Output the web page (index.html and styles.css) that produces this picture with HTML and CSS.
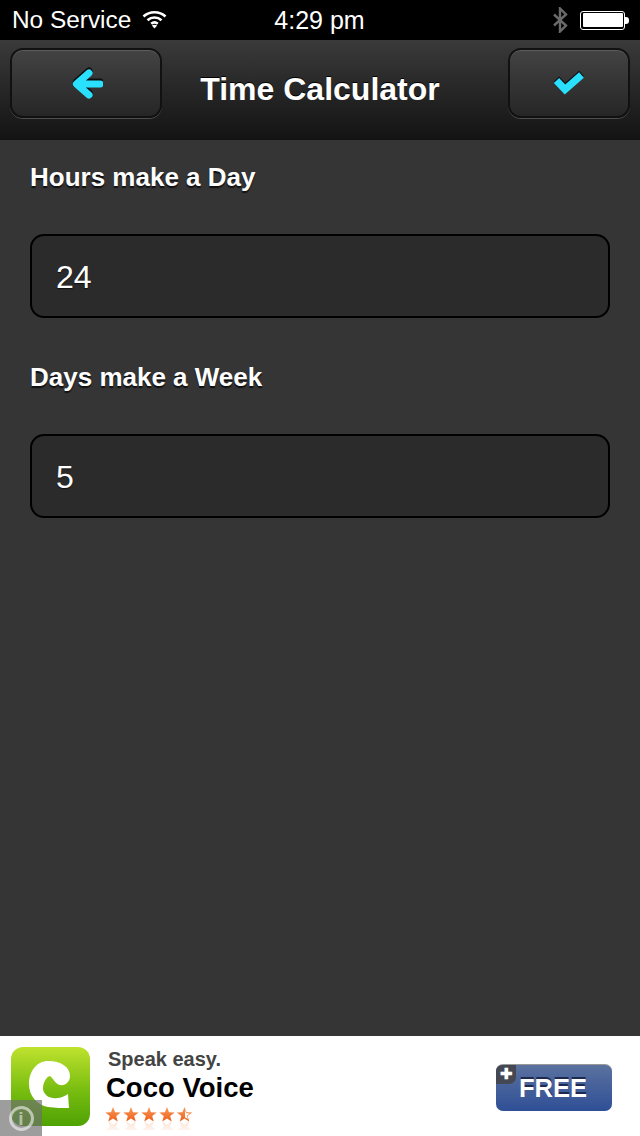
FILE: index.html
```html
<!DOCTYPE html>
<html lang="en">
<head>
<meta charset="utf-8">
<title>Time Calculator</title>
<link rel="stylesheet" href="styles.css">
</head>
<body>
<div class="app">
  <header class="status">
    <div class="status-left">
      <span class="carrier">No Service</span>
      <svg class="wifi" width="26" height="20" viewBox="0 0 26 20"><path d="M1.500 7.500C7.500 1.800 17.500 1.800 23.500 7.500M5.500 11.300C9.500 7.600 15.500 7.600 19.500 11.300M9.200 14.800C11.300 13 13.700 13 15.800 14.800" fill="none" stroke="#fff" stroke-width="2.600"/><path d="M12.500 19.500L9.800 16.600C11.500 15.300 13.500 15.300 15.200 16.600Z" fill="#fff"/></svg>
    </div>
    <span class="clock">4:29 pm</span>
    <div class="status-right">
      <svg class="bt" width="16" height="26" viewBox="0 0 16 26"><path d="M2 7.500L14 18.500L8 24.500V1.500L14 7.500L2 18.500" fill="none" stroke="#6a6a6a" stroke-width="2.400"/></svg>
      <div class="battery"><div class="battery-body"><div class="battery-fill"></div></div><div class="battery-tip"></div></div>
    </div>
  </header>
  <nav class="navbar">
    <button class="nav-btn nav-back" type="button">
      <svg width="34" height="36" viewBox="0 0 34 36"><path class="ico-shadow" d="M20 8L7.500 19L20 30M8 19H31" transform="translate(0 -2)" stroke-width="7" stroke-linecap="round" stroke-linejoin="round"/><path class="ico-cyan" d="M20 8L7.500 19L20 30M8 19H31" stroke-width="7" stroke-linecap="round" stroke-linejoin="round"/></svg>
    </button>
    <h1 class="title">Time Calculator</h1>
    <button class="nav-btn nav-done" type="button">
      <svg width="34" height="30" viewBox="0 0 34 30"><path class="ico-shadow" d="M4.500 12.500L13 21.500L29.500 7" transform="translate(0 -1.500)" stroke-width="7.200"/><path class="ico-cyan" d="M4.500 12.500L13 21.500L29.500 7" stroke-width="7.200"/></svg>
    </button>
  </nav>
  <main class="content">
    <label class="field-label">Hours make a Day</label>
    <div class="field">24</div>
    <label class="field-label">Days make a Week</label>
    <div class="field">5</div>
  </main>
  <footer class="ad">
    <div class="ad-icon">
      <svg width="80" height="80" viewBox="0 0 80 80"><defs><linearGradient id="g" x1="0" y1="0" x2="0" y2="1"><stop offset="0" stop-color="#bfe22e"/><stop offset="0.55" stop-color="#78bd10"/><stop offset="1" stop-color="#4fa204"/></linearGradient></defs><rect width="79" height="79" rx="12" fill="url(#g)"/><path d="M37 14C50 14 59 20 59 29C59 35 54 39 49 38C44 37 43 32 39 29C35 30 32 36 32 42C33 49 40 52 46 51C50 51 54 49 57 47L58 61C52 61 44 61 37 60C26 58 18 49 18 37C18 24 26 14 37 14Z" fill="#fff"/></svg>
    </div>
    <div class="ad-copy">
      <div class="ad-tag">Speak easy.</div>
      <div class="ad-name">Coco Voice</div>
      <svg class="ad-stars" width="90" height="26" viewBox="0 0 90 26">
        <defs>
          <linearGradient id="so" x1="0" y1="0" x2="0" y2="1"><stop offset="0" stop-color="#f79a5c"/><stop offset="1" stop-color="#ee5f18"/></linearGradient>
          <linearGradient id="sr" x1="0" y1="0" x2="0" y2="1"><stop offset="0" stop-color="#ee8a50" stop-opacity="0"/><stop offset="1" stop-color="#ee8a50" stop-opacity="0.22"/></linearGradient>
          <polygon id="star" points="0,-8 2,-2.700 7.700,-2.400 3.200,1 4.700,6.500 0,3.400 -4.700,6.500 -3.200,1 -7.700,-2.400 -2,-2.700"/>
        </defs>
        <g fill="url(#so)">
          <use href="#star" x="8" y="11"/><use href="#star" x="26" y="11"/><use href="#star" x="44" y="11"/><use href="#star" x="62" y="11"/><use href="#star" x="79.500" y="11"/>
        </g>
        <polygon points="80,6 81.300,9.200 85,9.500 82,11.800 83,15 80,13.200" fill="#fff"/>
        <g fill="url(#sr)" transform="translate(0 35) scale(1 -1)">
          <use href="#star" x="8" y="11"/><use href="#star" x="26" y="11"/><use href="#star" x="44" y="11"/><use href="#star" x="62" y="11"/><use href="#star" x="79.500" y="11"/>
        </g>
      </svg>
    </div>
    <div class="ad-free">
      <span class="ad-plus">✚</span>
      FREE
    </div>
    <div class="ad-info"><span class="ad-info-i">i</span></div>
  </footer>
</div>
</body>
</html>
```

FILE: styles.css
```css
* { box-sizing: border-box; }
html, body { margin: 0; padding: 0; }
body { width: 640px; height: 1136px; overflow: hidden; background: #353535; font-family: "Liberation Sans", Arial, sans-serif; }
.app { width: 640px; height: 1136px; display: flex; flex-direction: column; }

.status { height: 40px; flex: none; background: #000; color: #fff; display: grid; grid-template-columns: 1fr auto 1fr; align-items: center; padding: 0 11px 0 12px; }
.status-left { display: flex; align-items: center; gap: 11px; }
.carrier { line-height: 40px; font-size: 24.4px; }
.clock { line-height: 40px; font-size: 25px; margin-right: 2px; }
.wifi { margin-top: -2px; }
.status-right { display: flex; justify-content: flex-end; align-items: center; gap: 12px; }
.bt { display: block; }
.battery { display: flex; align-items: center; }
.battery-body { width: 45px; height: 19px; border: 1.5px solid #fff; border-radius: 3px; padding: 1.5px; background: #000; }
.battery-fill { width: 100%; height: 100%; background: #fff; border-radius: 1px; }
.battery-tip { width: 4px; height: 7px; background: #fff; border-radius: 0 3px 3px 0; }

.navbar { height: 100px; flex: none; background: linear-gradient(#3a3a3a, #131313); display: grid; grid-template-columns: 1fr auto 1fr; align-items: start; padding: 8px 10px 0; }
.nav-btn { height: 70px; border: 2px solid #111; border-radius: 13px; background: linear-gradient(#434343, #262626); box-shadow: 0 1px 0 rgba(255,255,255,0.22), inset 0 1px 0 rgba(255,255,255,0.14); padding: 0; display: flex; align-items: center; justify-content: center; }
.nav-back { width: 152px; justify-self: start; }
.nav-done { width: 122px; justify-self: end; }
.ico-cyan { fill: none; stroke: #2ae0ff; }
.ico-shadow { fill: none; stroke: #0e0e0e; }
.title { margin: 0; font-size: 32px; line-height: 36px; font-weight: 700; color: #fff; text-shadow: 0 -1px 0 #000; padding-top: 23px; }

.content { flex: 1; background: #353535; padding: 18px 30px 0; display: flex; flex-direction: column; }
.field-label { display: block; height: 38px; line-height: 38px; font-size: 26px; font-weight: 700; color: #fff; text-shadow: 0 2px 1px #111; }
.field { height: 84px; margin-top: 38px; margin-bottom: 40px; border: 2px solid #000; border-radius: 14px; background: #2b2b2b; color: #fff; font-size: 32px; line-height: 82px; padding-left: 24px; text-shadow: 0 1px 1px #111; }

.ad { height: 100px; flex: none; background: #fff; display: flex; align-items: flex-start; position: relative; }
.ad-icon { width: 80px; height: 80px; margin: 11px 0 0 11px; flex: none; }
.ad-icon svg { display: block; }
.ad-copy { margin-left: 15px; padding-top: 11px; color: #000; }
.ad-tag { font-size: 20px; line-height: 24px; font-weight: 700; color: #444; margin-left: 2px; }
.ad-name { font-size: 27.500px; line-height: 32px; font-weight: 700; margin-top: 1px; }
.ad-stars { display: block; margin-left: -1px; }
.ad-free { position: absolute; left: 496px; top: 28px; width: 116px; height: 47px; border-radius: 7px; background: linear-gradient(#5b729f, #2f4f96); color: #fff; font-size: 25.500px; font-weight: 700; line-height: 47px; text-align: right; padding-right: 25px; text-shadow: 0 -2px 0 #1c2a52; border-top: 1px solid #999; }
.ad-plus { position: absolute; left: 0; top: 0; width: 20px; height: 19px; border-radius: 6px 0 7px 0; background: #444852; font-size: 15px; line-height: 17px; text-align: center; text-shadow: none; }
.ad-info { position: absolute; left: 0; top: 64px; width: 42px; height: 36px; background: rgba(110,110,110,0.68); display: flex; align-items: center; justify-content: center; }
.ad-info-i { width: 25px; height: 25px; border: 3px solid rgba(255,255,255,0.55); border-radius: 50%; color: rgba(255,255,255,0.5); font-size: 19px; font-weight: 700; line-height: 19px; text-align: center; }
```
